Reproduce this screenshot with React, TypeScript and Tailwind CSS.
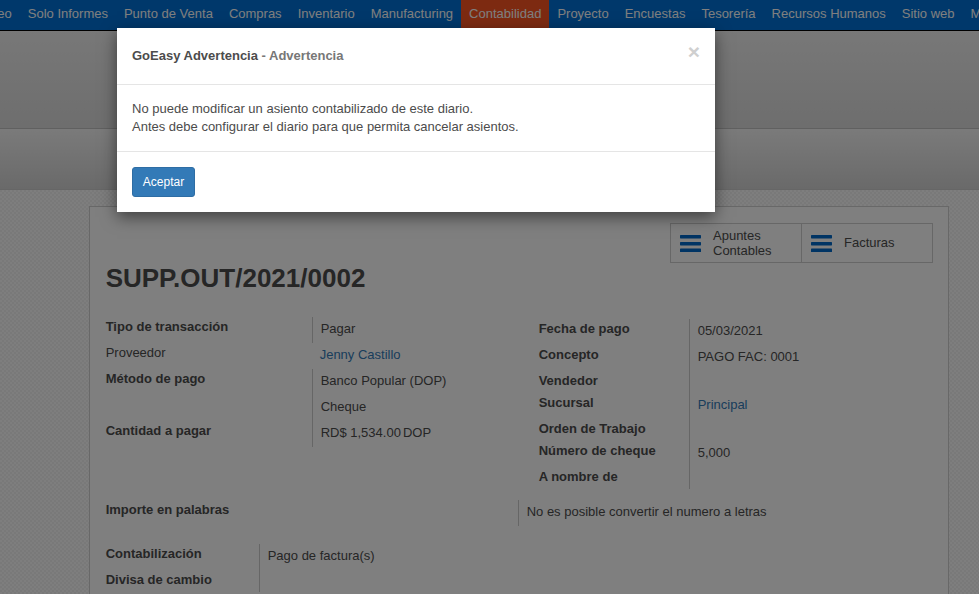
const labelCls = "font-bold pt-px";

function Row({
  label,
  value,
  link,
  labelW,
  plain,
  short,
}: {
  label: string;
  value?: React.ReactNode;
  link?: boolean;
  labelW: string;
  plain?: boolean;
  short?: boolean;
}) {
  return (
    <div className={`flex ${short ? "h-[22px]" : "h-[26px]"}`}>
      <div className={`${labelW} shrink-0 ${plain ? "pt-px" : labelCls}`}>{label}</div>
      <div className={`flex-1 pl-2 pt-[3px] whitespace-nowrap ${plain ? "" : "border-l border-[#ccc]"} ${link ? "text-[#337ab7]" : ""}`}>
        {value}
      </div>
    </div>
  );
}

function Bars() {
  return (
    <svg width="21" height="17" viewBox="0 0 21 17" className="shrink-0">
      <rect x="0" y="0" width="21" height="3.4" rx="0.6" fill="#0069c8" />
      <rect x="0" y="7" width="21" height="3.4" rx="0.6" fill="#0069c8" />
      <rect x="0" y="13.6" width="21" height="3.4" rx="0.6" fill="#0069c8" />
    </svg>
  );
}

const navItems = [
  "Solo Informes",
  "Punto de Venta",
  "Compras",
  "Inventario",
  "Manufacturing",
  "Contabilidad",
  "Proyecto",
  "Encuestas",
  "Tesorería",
  "Recursos Humanos",
  "Sitio web",
  "Más",
];

export default function App() {
  return (
    <div className="relative h-[594px] overflow-hidden bg-[repeating-conic-gradient(#f2f2f2_0_25%,#fdfdfd_0_50%)] bg-[length:4px_4px] font-['Liberation_Sans',sans-serif] text-[13px] leading-[18px] text-[#4c4c4c]">
      <nav className="flex h-[31px] overflow-hidden whitespace-nowrap border-b border-black bg-[#0070d6] text-white">
        <span className="-ml-[36px] px-2 leading-[28px]">Correo</span>
        {navItems.map((item) => (
          <span
            key={item}
            className={`px-2 leading-[28px] ${item === "Contabilidad" ? "bg-[#fa5422]" : ""}`}
          >
            {item}
          </span>
        ))}
      </nav>

      <div className="h-[98px] border-b border-[#c0c0c0] bg-gradient-to-b from-[#f0f0f0] to-[#dcdcdc]" />
      <div className="h-[61px] border-b border-[#cccccc] bg-gradient-to-b from-[#f5f5f5] to-[#d4d4d4]" />

      <div className="ml-[89px] mr-[30px] mt-4 h-[420px] border border-[#d0d0d0] bg-white pl-[15.67px] pr-[15px] pt-4">
        <div className="flex justify-end">
          <div className="flex h-10 border border-[#cfcfcf]">
            <div className="flex w-[130px] items-center gap-3 pl-[9px] leading-[15px]">
              <Bars />
              <span>
                Apuntes
                <br />
                Contables
              </span>
            </div>
            <div className="flex w-[131px] items-center gap-3 border-l border-[#cfcfcf] pl-[9px]">
              <Bars />
              <span>Facturas</span>
            </div>
          </div>
        </div>

        <h1 className="text-[26px] font-bold leading-[30px]">SUPP.OUT/2021/0002</h1>

        <div className="mt-[24px] flex items-start">
          <div className="w-[433px]">
            <Row labelW="w-[206px]" label="Tipo de transacción" value="Pagar" />
            <Row labelW="w-[206px]" label="Proveedor" value="Jenny Castillo" link plain />
            <Row labelW="w-[206px]" label="Método de pago" value="Banco Popular (DOP)" />
            <Row labelW="w-[206px]" label="" value="Cheque" />
            <Row
              labelW="w-[206px]"
              label="Cantidad a pagar"
              value={
                <>
                  RD$ 1,534.00<span className="ml-[2px]">DOP</span>
                </>
              }
            />
          </div>
          <div className="mt-[2px] w-[394px]">
            <Row labelW="w-[150px]" label="Fecha de pago" value="05/03/2021" />
            <Row labelW="w-[150px]" label="Concepto" value="PAGO FAC: 0001" />
            <Row labelW="w-[150px]" label="Vendedor" short />
            <Row labelW="w-[150px]" label="Sucursal" value="Principal" link />
            <Row labelW="w-[150px]" label="Orden de Trabajo" short />
            <Row labelW="w-[150px]" label="Número de cheque" value="5,000" />
            <Row labelW="w-[150px]" label="A nombre de" short />
          </div>
        </div>

        <div className="mt-[11px]">
          <Row labelW="w-[412px]" label="Importe en palabras" value="No es posible convertir el numero a letras" />
        </div>

        <div className="mt-[18px]">
          <Row labelW="w-[153px]" label="Contabilización" value="Pago de factura(s)" />
          <Row labelW="w-[153px]" label="Divisa de cambio" short />
        </div>
      </div>

      <div className="absolute inset-0 bg-black/50" />

      <div className="absolute left-[117px] top-[28px] w-[598px] bg-white shadow-[0_5px_15px_rgba(0,0,0,0.5)]">
        <div className="relative h-[57px] border-b border-[#e5e5e5] px-[15px] pt-[19px]">
          <span className="font-bold text-[#4c4c4c]">GoEasy Advertencia</span>
          <span className="font-bold text-[#777]"> - Advertencia</span>
          <span className="absolute right-[15px] top-[13px] text-[21px] font-bold leading-[21px] text-[#cfcfcf]">×</span>
        </div>
        <div className="h-[67px] border-b border-[#e5e5e5] px-[15px] pt-[15px]">
          <p>No puede modificar un asiento contabilizado de este diario.</p>
          <p>Antes debe configurar el diario para que permita cancelar asientos.</p>
        </div>
        <div className="h-[60px] px-[15px] pt-[15px]">
          <button className="h-[30px] w-[63px] rounded-[3px] border border-[#2e6da4] bg-[#337ab7] text-xs text-white">
            Aceptar
          </button>
        </div>
      </div>
    </div>
  );
}
